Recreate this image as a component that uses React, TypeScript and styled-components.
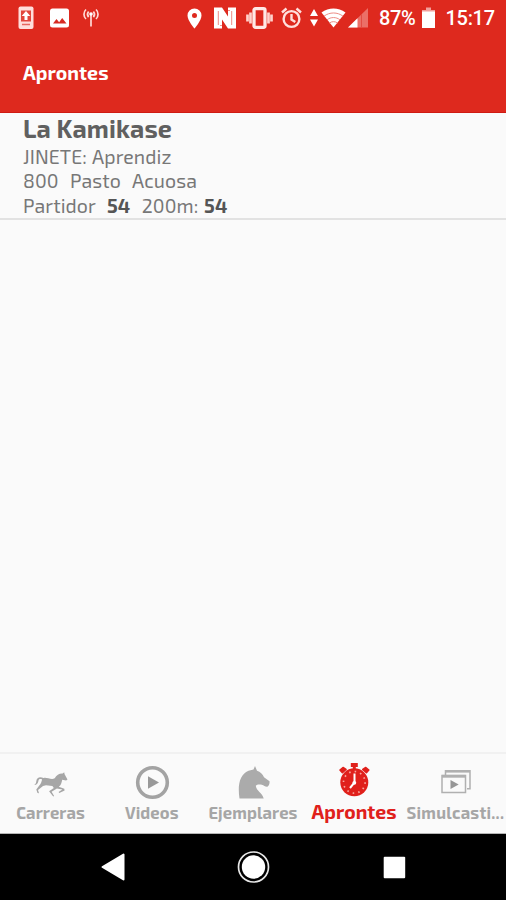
import React from 'react';
import styled, { createGlobalStyle } from 'styled-components';

const Global = createGlobalStyle`
  * { box-sizing: border-box; }
  body { margin: 0; background: #fafafa; }
`;

const Screen = styled.div`
  display: flex;
  flex-direction: column;
  width: 506px;
  height: 900px;
  overflow: hidden;
  background: #fafafa;
  font-family: "Exo 2", "Noto Sans", sans-serif;
`;

const AppBar = styled.header`
  height: 113px;
  background: #de291e;
  border-bottom: 1px solid #cf1a12;
  color: #fff;
`;

const StatusBar = styled.div`
  display: flex;
  align-items: center;
  height: 36px;
  padding-left: 18px;
`;

const StatusIcon = styled.svg<{ $gap?: number }>`
  flex: none;
  display: block;
  margin-left: ${p => p.$gap ?? 0}px;
`;

const StatusText = styled.span<{ $gap: number; $width: number; $spacing: number }>`
  flex: none;
  width: ${p => p.$width}px;
  margin-left: ${p => p.$gap}px;
  font: 500 20px/36px Roboto, sans-serif;
  letter-spacing: ${p => p.$spacing}px;
  white-space: nowrap;
`;

const Title = styled.h1`
  margin: 0;
  padding: 22px 0 0 23px;
  font-size: 19.5px;
  line-height: 30px;
  font-weight: 700;
  letter-spacing: 0.05px;
`;

const List = styled.main`
  flex: 1;
`;

const Entry = styled.article`
  height: 107px;
  padding: 1px 0 0 23px;
  border-bottom: 2px solid #e2e2e2;
  color: #777;
`;

const Name = styled.h2`
  margin: 0;
  height: 31px;
  font-size: 25px;
  line-height: 29px;
  font-weight: 700;
  letter-spacing: 0.12px;
  color: #606060;
`;

const Line = styled.p`
  margin: 0;
  height: 24.4px;
  font-size: 19.5px;
  line-height: 24.4px;
  letter-spacing: 0.08px;
  word-spacing: 1.3px;
  white-space: pre;
  b { color: #555; }
`;

const Tabs = styled.nav`
  display: grid;
  grid-template-columns: repeat(5, 101.2px);
  height: 82px;
  border-top: 2px solid #f1f1f1;
  border-bottom: 1px solid #b5b5b5;
`;

const Tab = styled.div<{ $active?: boolean }>`
  display: flex;
  flex-direction: column;
  align-items: center;
  padding-top: 9px;
  color: ${p => (p.$active ? '#e0201b' : '#a6a6a6')};
`;

const TabIcon = styled.svg`
  display: block;
  flex: none;
`;

const TabLabel = styled.span<{ $size?: number; $spacing?: number }>`
  margin-top: -3px;
  font-size: ${p => p.$size ?? 16.6}px;
  line-height: 24px;
  font-weight: 700;
  letter-spacing: ${p => p.$spacing ?? 0.1}px;
  white-space: nowrap;
`;

const SystemBar = styled.footer`
  display: flex;
  align-items: center;
  height: 66px;
  padding-left: 101px;
  background: #000;
`;

const HorseIcon = () => (
  <TabIcon width="40" height="40" viewBox="0 0 40 40" fill="currentColor">
    <path d="M12.500 15C9 13.300 5.800 14.300 5.400 17.800c-.3 2.400-.8 3.400-2.200 4.200 2.800-.2 3.800-1.700 4.200-4.100.3-1.800 1.600-2.300 3.700-1.500-.5 2-1.200 4.600-2.800 6.200L5.300 26.500l1.200 3.500 1.500.2-1-3.300 5-3.800 3-.8 6.400.8 1.400 2-4.700 3.200 4.100 5.300.9-.7-2.500-4.200 5.300-3.100 5.500 1-3.800 2.300.7 1 5.300-2.500-.3-1.600-5.500-2c2.200-1.700 2.700-3.800 3.400-7.100l3.900.8 1.400-1.100-2.900-5.100-.4-2-1.500 1.300c-3.300-.3-6.200 1.900-8 4.600-1.900 1.300-4.200.6-6.300.1-1.900-.4-3.300-.7-4.600-.3Z" />
  </TabIcon>
);

const PlayIcon = () => (
  <TabIcon width="40" height="40" viewBox="0 0 40 40">
    <circle cx="20.500" cy="19.500" r="14.800" fill="none" stroke="#a3a3a3" strokeWidth="3.600" />
    <path d="M16 13.200v12.600l11-6.300Z" fill="#999" />
  </TabIcon>
);

const KnightIcon = () => (
  <TabIcon width="40" height="40" viewBox="0 0 40 40" fill="#ababab">
    <path d="M6.500 35.500C4.500 22 6.500 12 15.500 7.800L20.500 6.500 22 3l2 4.800c3.300 1.200 5.600 3.200 7 6.500l5.500 3.900c.3 2.300-.4 4.400-2.200 5.500-2.200.2-3.300-1.200-5.500-1.900-2.400-.6-4.800-.5-6 .9.500 5.200 6.500 7 7.900 12.800Z" />
  </TabIcon>
);

const StopwatchIcon = () => (
  <TabIcon width="40" height="40" viewBox="0 0 40 40">
    <circle cx="20.300" cy="19.300" r="14" fill="currentColor" />
    <path d="M16.800 0h7v4h-2v3.500h-3V4h-2Z" fill="currentColor" />
    <path d="m6 7 3-2.500 3 2-3.600 3.200Zm28.800 0-3-2.500-3 2 3.600 3.200Z" fill="currentColor" stroke="currentColor" strokeWidth="1.600" strokeLinejoin="round" />
    <circle cx="20.300" cy="19.300" r="10.800" fill="none" stroke="#f8a59c" strokeWidth="1.700" strokeDasharray="1.600 4.055" />
    <path d="M20.500 10.500v9L16 25" fill="none" stroke="#fff" strokeWidth="2" />
    <circle cx="20.300" cy="19.800" r="1.900" fill="#fff" />
  </TabIcon>
);

const PlaylistIcon = () => (
  <TabIcon width="40" height="40" viewBox="0 0 40 40" fill="none" stroke="#b0b0b0" strokeWidth="1.500">
    <path d="M10.500 12V7.800H35v18h-3" />
    <path d="M10.500 8.300H35" strokeWidth="2.600" />
    <path d="M7 12.500h23.500V29.500H7Z" />
    <path d="M7 13.300h23.500" strokeWidth="2.800" />
    <path d="M15.500 17v9l8.200-4.500Z" fill="#969696" stroke="none" />
  </TabIcon>
);

const StatusIcons = () => (
  <>
    <StatusIcon width="16" height="24" viewBox="0 0 16 24">
      <rect x=".5" y=".5" width="15" height="22.500" rx="2" fill="#ffdedb" />
      <path d="M3 4.500h10v11H3Z" fill="#e2453b" />
      <path d="M8 5l4.300 5H9.500v4h-3v-4H3.700Z" fill="#fff" />
      <path d="M4 18.500h8" stroke="#e6675f" strokeWidth="1.500" />
    </StatusIcon>
    <StatusIcon $gap={16} width="19" height="20" viewBox="0 0 19 20">
      <rect y=".5" width="19" height="19" rx="2.500" fill="#fff" />
      <path d="m3 15.500 3.500-4.500 2.600 3.200 3.100-4.200 4.300 5.500Z" fill="#d72b23" />
    </StatusIcon>
    <StatusIcon $gap={14} width="16" height="20" viewBox="0 0 16 20" fill="none" stroke="#ffd9d5" strokeWidth="1.700">
      <path d="M3 1.500C.3 4 .3 8.500 3 11M13 1.500c2.700 2.500 2.700 7 0 9.500M5.600 3.500c-1.400 1.700-1.400 3.900 0 5.600M10.400 3.500c1.400 1.700 1.400 3.900 0 5.600M8 6v12.500" />
      <circle cx="8" cy="6" r="1.800" fill="#fff" stroke="none" />
    </StatusIcon>
    <StatusIcon $gap={88} width="15" height="21" viewBox="0 0 15 21">
      <path d="M7.500.5A7 7 0 0 0 .5 7.500C.5 12.500 7.500 20.500 7.500 20.500s7-8 7-13a7 7 0 0 0-7-7Zm0 4.500a2.500 2.500 0 1 1 0 5 2.500 2.500 0 0 1 0-5Z" fill="#fff" fillRule="evenodd" />
    </StatusIcon>
    <StatusIcon $gap={12} width="22" height="22" viewBox="0 0 22 22">
      <path d="M0 .5h8l6 9V4h2.500v13L6 6v12.500h2v3H0ZM22 21.500h-8l-6-9V18H5.500V5L16 16V3.500h-2v-3h8Z" fill="#fff" />
      <path d="M4.300 4v14M17.700 4v14" stroke="#eb7d75" strokeWidth=".9" />
    </StatusIcon>
    <StatusIcon $gap={10} width="27" height="22" viewBox="0 0 27 22">
      <path d="M1.500 7.500v7M4.500 5.500v11M22.500 5.500v11M25.500 7.500v7" stroke="#ffd2cc" strokeWidth="2.700" />
      <rect x="8" y="1.700" width="11" height="18.600" rx="1.500" fill="none" stroke="#ffe9e6" strokeWidth="3.300" />
    </StatusIcon>
    <StatusIcon $gap={8} width="21" height="22" viewBox="0 0 21 22" fill="none" stroke="#ffdfdc" strokeWidth="2.400">
      <circle cx="10.500" cy="12" r="7.900" />
      <path d="m1 5.500 4.500-4M20 5.500l-4.500-4M10.500 7v5.500l3.800 2.500" />
    </StatusIcon>
    <StatusIcon $gap={8} width="8" height="18" viewBox="0 0 8 18" fill="#fff">
      <path d="M4 0 8 7H0ZM4 17.500 0 10.500h8Z" />
    </StatusIcon>
    <StatusIcon $gap={3} width="25" height="20" viewBox="0 0 25 20">
      <path d="M.5 4.500C7.500-.8 17.500-.8 24.500 4.500l-12 15Z" fill="#fff" />
      <path d="M3 8.200c5.500-4.300 13.500-4.300 19 0M6 11.800c3.800-3 9.200-3 13 0M8.500 15c2.300-1.800 5.700-1.800 8 0" stroke="#ed8c86" strokeWidth="1" fill="none" />
    </StatusIcon>
    <StatusIcon $gap={2} width="20" height="20" viewBox="0 0 20 20">
      <path d="M20 0v19.500H0Z" fill="#eb6f67" />
      <path d="M9.500 10.300v9.200H0Z" fill="#fff" />
      <path d="M13.500 6v13.500" stroke="#e34b42" />
    </StatusIcon>
    <StatusText $gap={11} $width={37} $spacing={-0.4}>87%</StatusText>
    <StatusIcon $gap={6} width="13" height="22" viewBox="0 0 13 22">
      <path d="M4 .5h5V3h4v3H0V3h4Z" fill="#f1a09b" />
      <path d="M0 4.500h13V21H0Z" fill="#fff" />
    </StatusIcon>
    <StatusText $gap={10.5} $width={52} $spacing={-0.3}>15:17</StatusText>
  </>
);

export default function App() {
  return (
    <>
      <Global />
      <Screen>
        <AppBar>
          <StatusBar><StatusIcons /></StatusBar>
          <Title>Aprontes</Title>
        </AppBar>
        <List>
          <Entry>
            <Name>La Kamikase</Name>
            <Line>JINETE: Aprendiz</Line>
            <Line>{'800  Pasto  Acuosa'}</Line>
            <Line>{'Partidor  '}<b>54</b>{'  200m: '}<b>54</b></Line>
          </Entry>
        </List>
        <Tabs>
          <Tab><HorseIcon /><TabLabel>Carreras</TabLabel></Tab>
          <Tab><PlayIcon /><TabLabel>Videos</TabLabel></Tab>
          <Tab><KnightIcon /><TabLabel>Ejemplares</TabLabel></Tab>
          <Tab $active><StopwatchIcon /><TabLabel $size={19.4} $spacing={0.05}>Aprontes</TabLabel></Tab>
          <Tab><PlaylistIcon /><TabLabel $spacing={0.25}>Simulcasti...</TabLabel></Tab>
        </Tabs>
        <SystemBar>
          <StatusIcon width="24" height="28" viewBox="0 0 24 28">
            <path d="M22.500 1.500v25L1.500 14Z" fill="#fff" stroke="#fff" strokeWidth="2" strokeLinejoin="round" />
          </StatusIcon>
          <StatusIcon $gap={112} width="34" height="34" viewBox="0 0 34 34">
            <circle cx="16.500" cy="17" r="15" fill="none" stroke="#e8e8e8" strokeWidth="1.700" />
            <circle cx="16.500" cy="17" r="11.700" fill="#fff" />
          </StatusIcon>
          <StatusIcon $gap={112} width="23" height="23" viewBox="0 0 23 23">
            <rect x=".7" y=".7" width="21.500" height="21.500" rx="1" fill="#fff" />
          </StatusIcon>
        </SystemBar>
      </Screen>
    </>
  );
}
